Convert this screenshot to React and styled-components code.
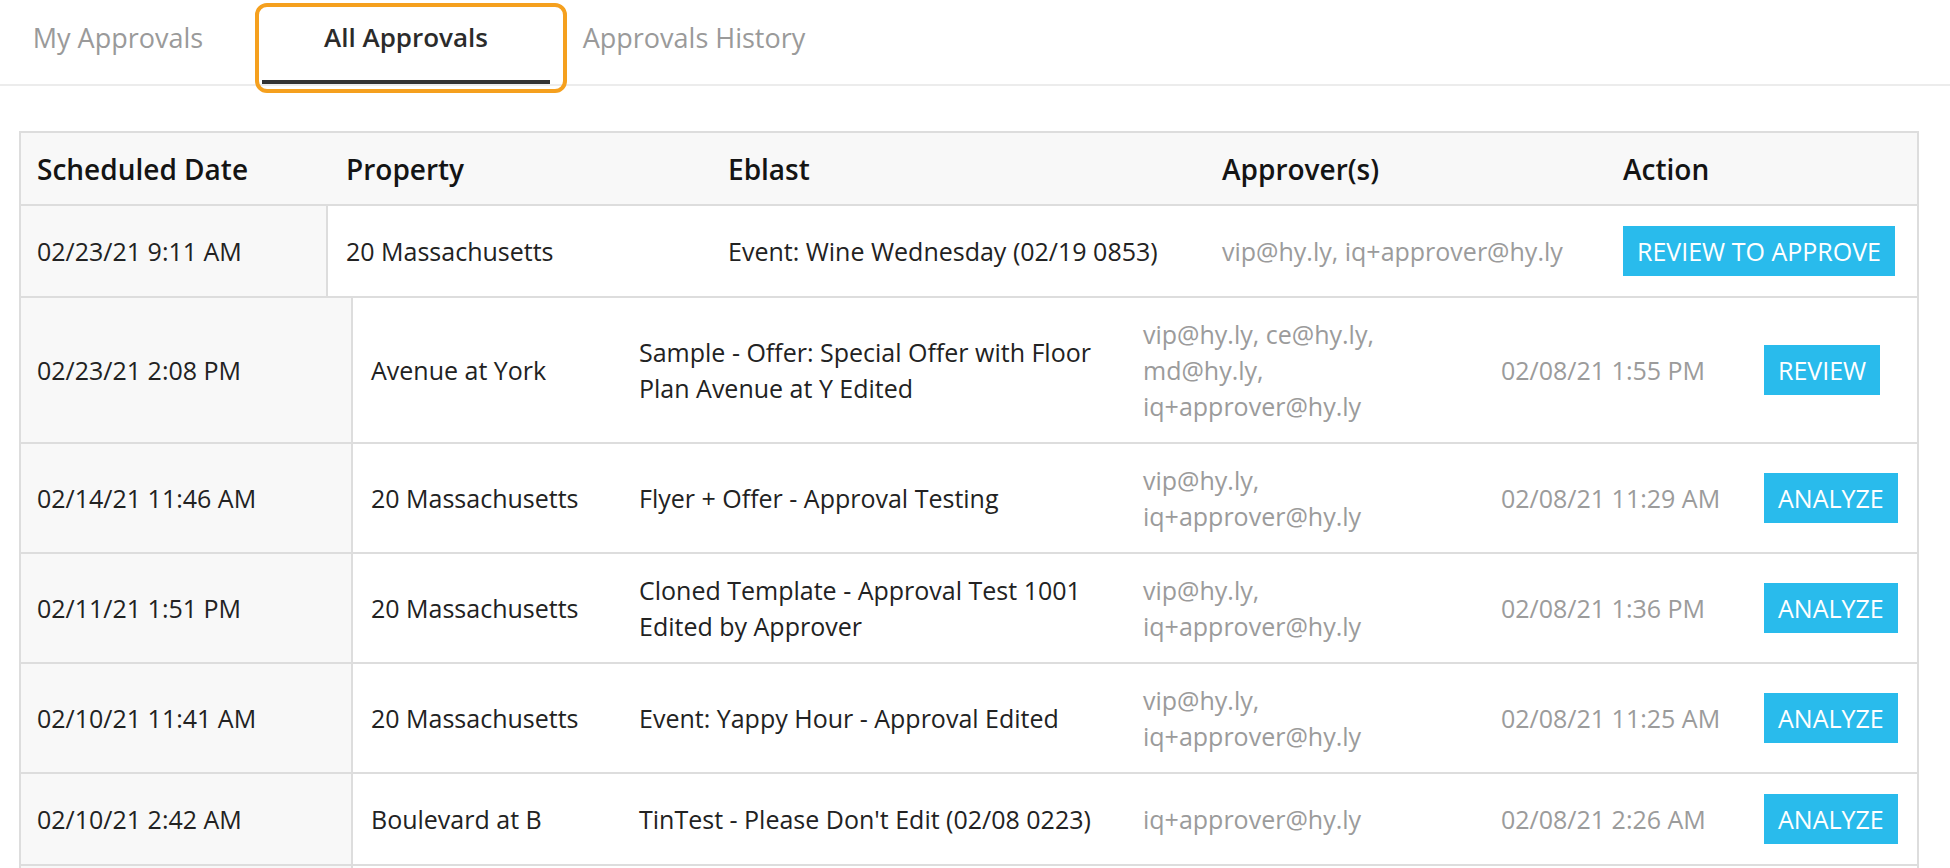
import React from 'react'
import styled, { createGlobalStyle } from 'styled-components'

const GlobalStyle = createGlobalStyle`
  html, body {
    margin: 0;
    padding: 0;
    background: #fff;
    font-family: "Open Sans", "Liberation Sans", sans-serif;
    color: #222;
  }
  * { box-sizing: border-box; }
`

const Page = styled.div`
  width: 1950px;
  height: 868px;
  overflow: hidden;
`

const TabBar = styled.nav`
  display: flex;
  height: 86px;
  border-bottom: 2px solid #ececec;
  margin-left: -26px;
`

const Tab = styled.button`
  position: relative;
  width: 288px;
  height: 84px;
  padding: 0 0 10px;
  border: none;
  background: none;
  font-family: inherit;
  font-size: ${p => (p.$active ? 26 : 27)}px;
  font-weight: ${p => (p.$active ? 600 : 400)};
  color: ${p => (p.$active ? '#2b2b2b' : '#9a9a9a')};
  cursor: pointer;

  &::after {
    content: '';
    display: ${p => (p.$active ? 'block' : 'none')};
    position: absolute;
    left: 0;
    right: 0;
    bottom: 0;
    height: 4px;
    background: #333;
  }

  &::before {
    content: '';
    display: ${p => (p.$active ? 'block' : 'none')};
    position: absolute;
    left: -7px;
    right: -17px;
    top: 3px;
    bottom: -9px;
    border: 4px solid #f5a01e;
    border-radius: 12px;
  }
`

const Content = styled.main`
  padding: 45px 31px 0 19px;
`

const Table = styled.table`
  width: 1900px;
  table-layout: fixed;
  border-collapse: separate;
  border-spacing: 0;
  border-left: 2px solid #ddd;
  border-right: 2px solid #ddd;
  border-top: ${p => (p.$top ? '2px solid #ddd' : 'none')};
`

const HeadCell = styled.th`
  width: ${p => p.$w}px;
  padding: 18px 18px 17px ${p => (p.$first ? 16 : 18)}px;
  background: #f8f8f8;
  border-bottom: 2px solid #ddd;
  text-align: left;
  font-size: 28px;
  line-height: 36px;
  font-weight: 600;
  color: #141414;
`

const Cell = styled.td`
  width: ${p => p.$w}px;
  height: ${p => (p.$blank ? 90 : 0)}px;
  padding: 18px 18px 18px ${p => (p.$first ? 16 : 18)}px;
  border-bottom: 2px solid #ddd;
  border-right: ${p => (p.$first ? '2px solid #ddd' : 'none')};
  background: ${p => (p.$first ? '#f8f8f8' : '#fff')};
  vertical-align: middle;
  font-size: 25px;
  line-height: 36px;
  color: ${p => (p.$muted ? '#9b9b9b' : '#222')};
`

const ActionButton = styled.button`
  display: inline-block;
  margin: 2px 0;
  height: 50px;
  padding: 0 14px;
  border: none;
  border-radius: 0;
  background: #29bbec;
  color: #fff;
  font-family: inherit;
  font-size: 25px;
  line-height: 50px;
  text-transform: uppercase;
  vertical-align: middle;
  cursor: pointer;
`

const mine = {
  date: '02/23/21 9:11 AM',
  property: '20 Massachusetts',
  eblast: 'Event: Wine Wednesday (02/19 0853)',
  approvers: 'vip@hy.ly, iq+approver@hy.ly',
}

const rows = [
  {
    date: '02/23/21 2:08 PM',
    property: 'Avenue at York',
    eblast: 'Sample - Offer: Special Offer with Floor Plan Avenue at Y Edited',
    approvers: 'vip@hy.ly, ce@hy.ly, md@hy.ly, iq+approver@hy.ly',
    sent: '02/08/21 1:55 PM',
    action: 'Review',
  },
  {
    date: '02/14/21 11:46 AM',
    property: '20 Massachusetts',
    eblast: 'Flyer + Offer - Approval Testing',
    approvers: 'vip@hy.ly, iq+approver@hy.ly',
    sent: '02/08/21 11:29 AM',
    action: 'Analyze',
  },
  {
    date: '02/11/21 1:51 PM',
    property: '20 Massachusetts',
    eblast: 'Cloned Template - Approval Test 1001 Edited by Approver',
    approvers: 'vip@hy.ly, iq+approver@hy.ly',
    sent: '02/08/21 1:36 PM',
    action: 'Analyze',
  },
  {
    date: '02/10/21 11:41 AM',
    property: '20 Massachusetts',
    eblast: 'Event: Yappy Hour - Approval Edited',
    approvers: 'vip@hy.ly, iq+approver@hy.ly',
    sent: '02/08/21 11:25 AM',
    action: 'Analyze',
  },
  {
    date: '02/10/21 2:42 AM',
    property: 'Boulevard at B',
    eblast: "TinTest - Please Don't Edit (02/08 0223)",
    approvers: 'iq+approver@hy.ly',
    sent: '02/08/21 2:26 AM',
    action: 'Analyze',
  },
]

const top = [307, 382, 494, 401, 312]
const cols = [332, 268, 504, 358, 263, 171]

export default function App() {
  return (
    <Page>
      <GlobalStyle />
      <TabBar>
        <Tab>My Approvals</Tab>
        <Tab $active>All Approvals</Tab>
        <Tab>Approvals History</Tab>
      </TabBar>

      <Content>
        <Table $top>
          <thead>
            <tr>
              <HeadCell $w={top[0]} $first>Scheduled Date</HeadCell>
              <HeadCell $w={top[1]}>Property</HeadCell>
              <HeadCell $w={top[2]}>Eblast</HeadCell>
              <HeadCell $w={top[3]}>Approver(s)</HeadCell>
              <HeadCell $w={top[4]}>Action</HeadCell>
            </tr>
          </thead>
          <tbody>
            <tr>
              <Cell $w={top[0]} $first>{mine.date}</Cell>
              <Cell $w={top[1]}>{mine.property}</Cell>
              <Cell $w={top[2]}>{mine.eblast}</Cell>
              <Cell $w={top[3]} $muted>{mine.approvers}</Cell>
              <Cell $w={top[4]}>
                <ActionButton>Review to approve</ActionButton>
              </Cell>
            </tr>
          </tbody>
        </Table>

        <Table>
          <tbody>
            {rows.map(r => (
              <tr key={r.date}>
                <Cell $w={cols[0]} $first>{r.date}</Cell>
                <Cell $w={cols[1]}>{r.property}</Cell>
                <Cell $w={cols[2]}>{r.eblast}</Cell>
                <Cell $w={cols[3]} $muted>{r.approvers}</Cell>
                <Cell $w={cols[4]} $muted>{r.sent}</Cell>
                <Cell $w={cols[5]}>
                  <ActionButton>{r.action}</ActionButton>
                </Cell>
              </tr>
            ))}
            <tr>
              {cols.map((w, i) => (
                <Cell key={i} $w={w} $first={i === 0} $blank />
              ))}
            </tr>
          </tbody>
        </Table>
      </Content>
    </Page>
  )
}
